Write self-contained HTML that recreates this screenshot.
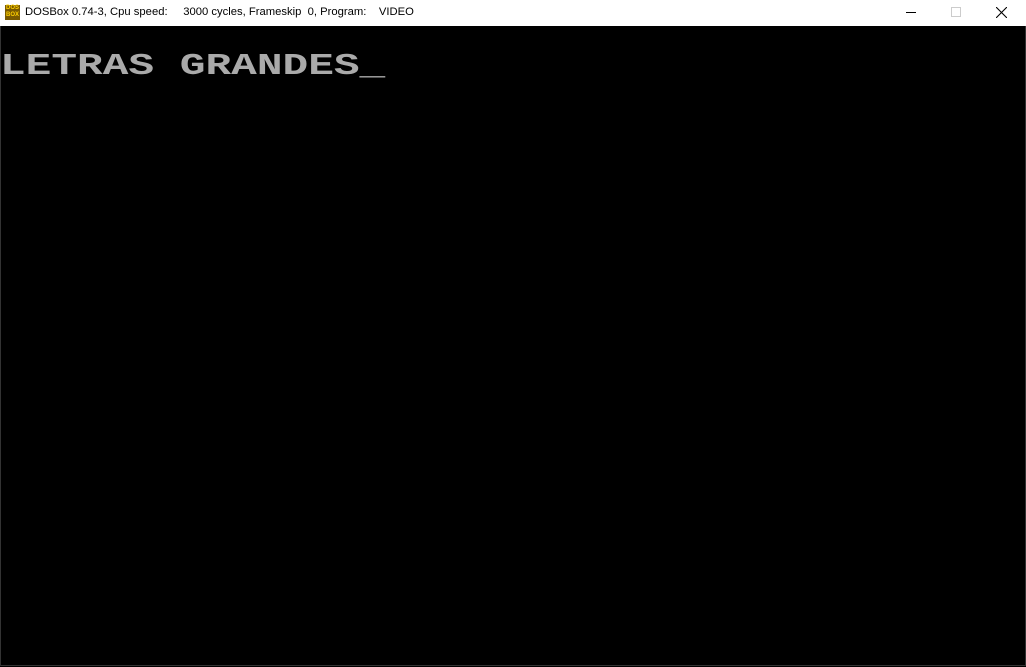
<!DOCTYPE html>
<html><head><style>
html,body{margin:0;padding:0;width:1026px;height:667px;overflow:hidden;background:#000;}
.tb{position:absolute;left:0;top:0;width:1026px;height:26px;background:#fff;font-family:"Liberation Sans",sans-serif;font-size:11.25px;color:#000;}
.ic{position:absolute;left:5px;top:5px;width:15px;height:15px;background:#7a5a00;color:#ffd000;font:bold 6px/7px "Liberation Sans",sans-serif;text-align:center;}
.t{position:absolute;left:25px;top:6px;white-space:pre;}
.txt{position:absolute;left:0;top:51px;font:bold 42.8px/1 "Liberation Mono",monospace;color:#aaa;white-space:pre;transform:scaleY(0.72);transform-origin:0 0;}
.frame{position:absolute;left:0;top:26px;width:1024px;height:639px;border:1px solid #333;border-top:none;}
</style></head><body>
<div class="tb">
<div class="ic">DOS<br>BOX</div>
<div class="t">DOSBox 0.74-3, Cpu speed:     3000 cycles, Frameskip  0, Program:    VIDEO</div>
<div style="position:absolute;left:906px;top:12px;width:10px;height:1px;background:#000"></div>
<div style="position:absolute;left:951px;top:7px;width:8px;height:8px;border:1px solid #ccc"></div>
<svg style="position:absolute;left:996px;top:7px" width="11" height="11"><path d="M0 0L11 11M11 0L0 11" stroke="#000" stroke-width="1.1"/></svg>
</div>
<div class="frame"></div>
<div class="txt">LETRAS GRANDES_</div>
</body></html>
